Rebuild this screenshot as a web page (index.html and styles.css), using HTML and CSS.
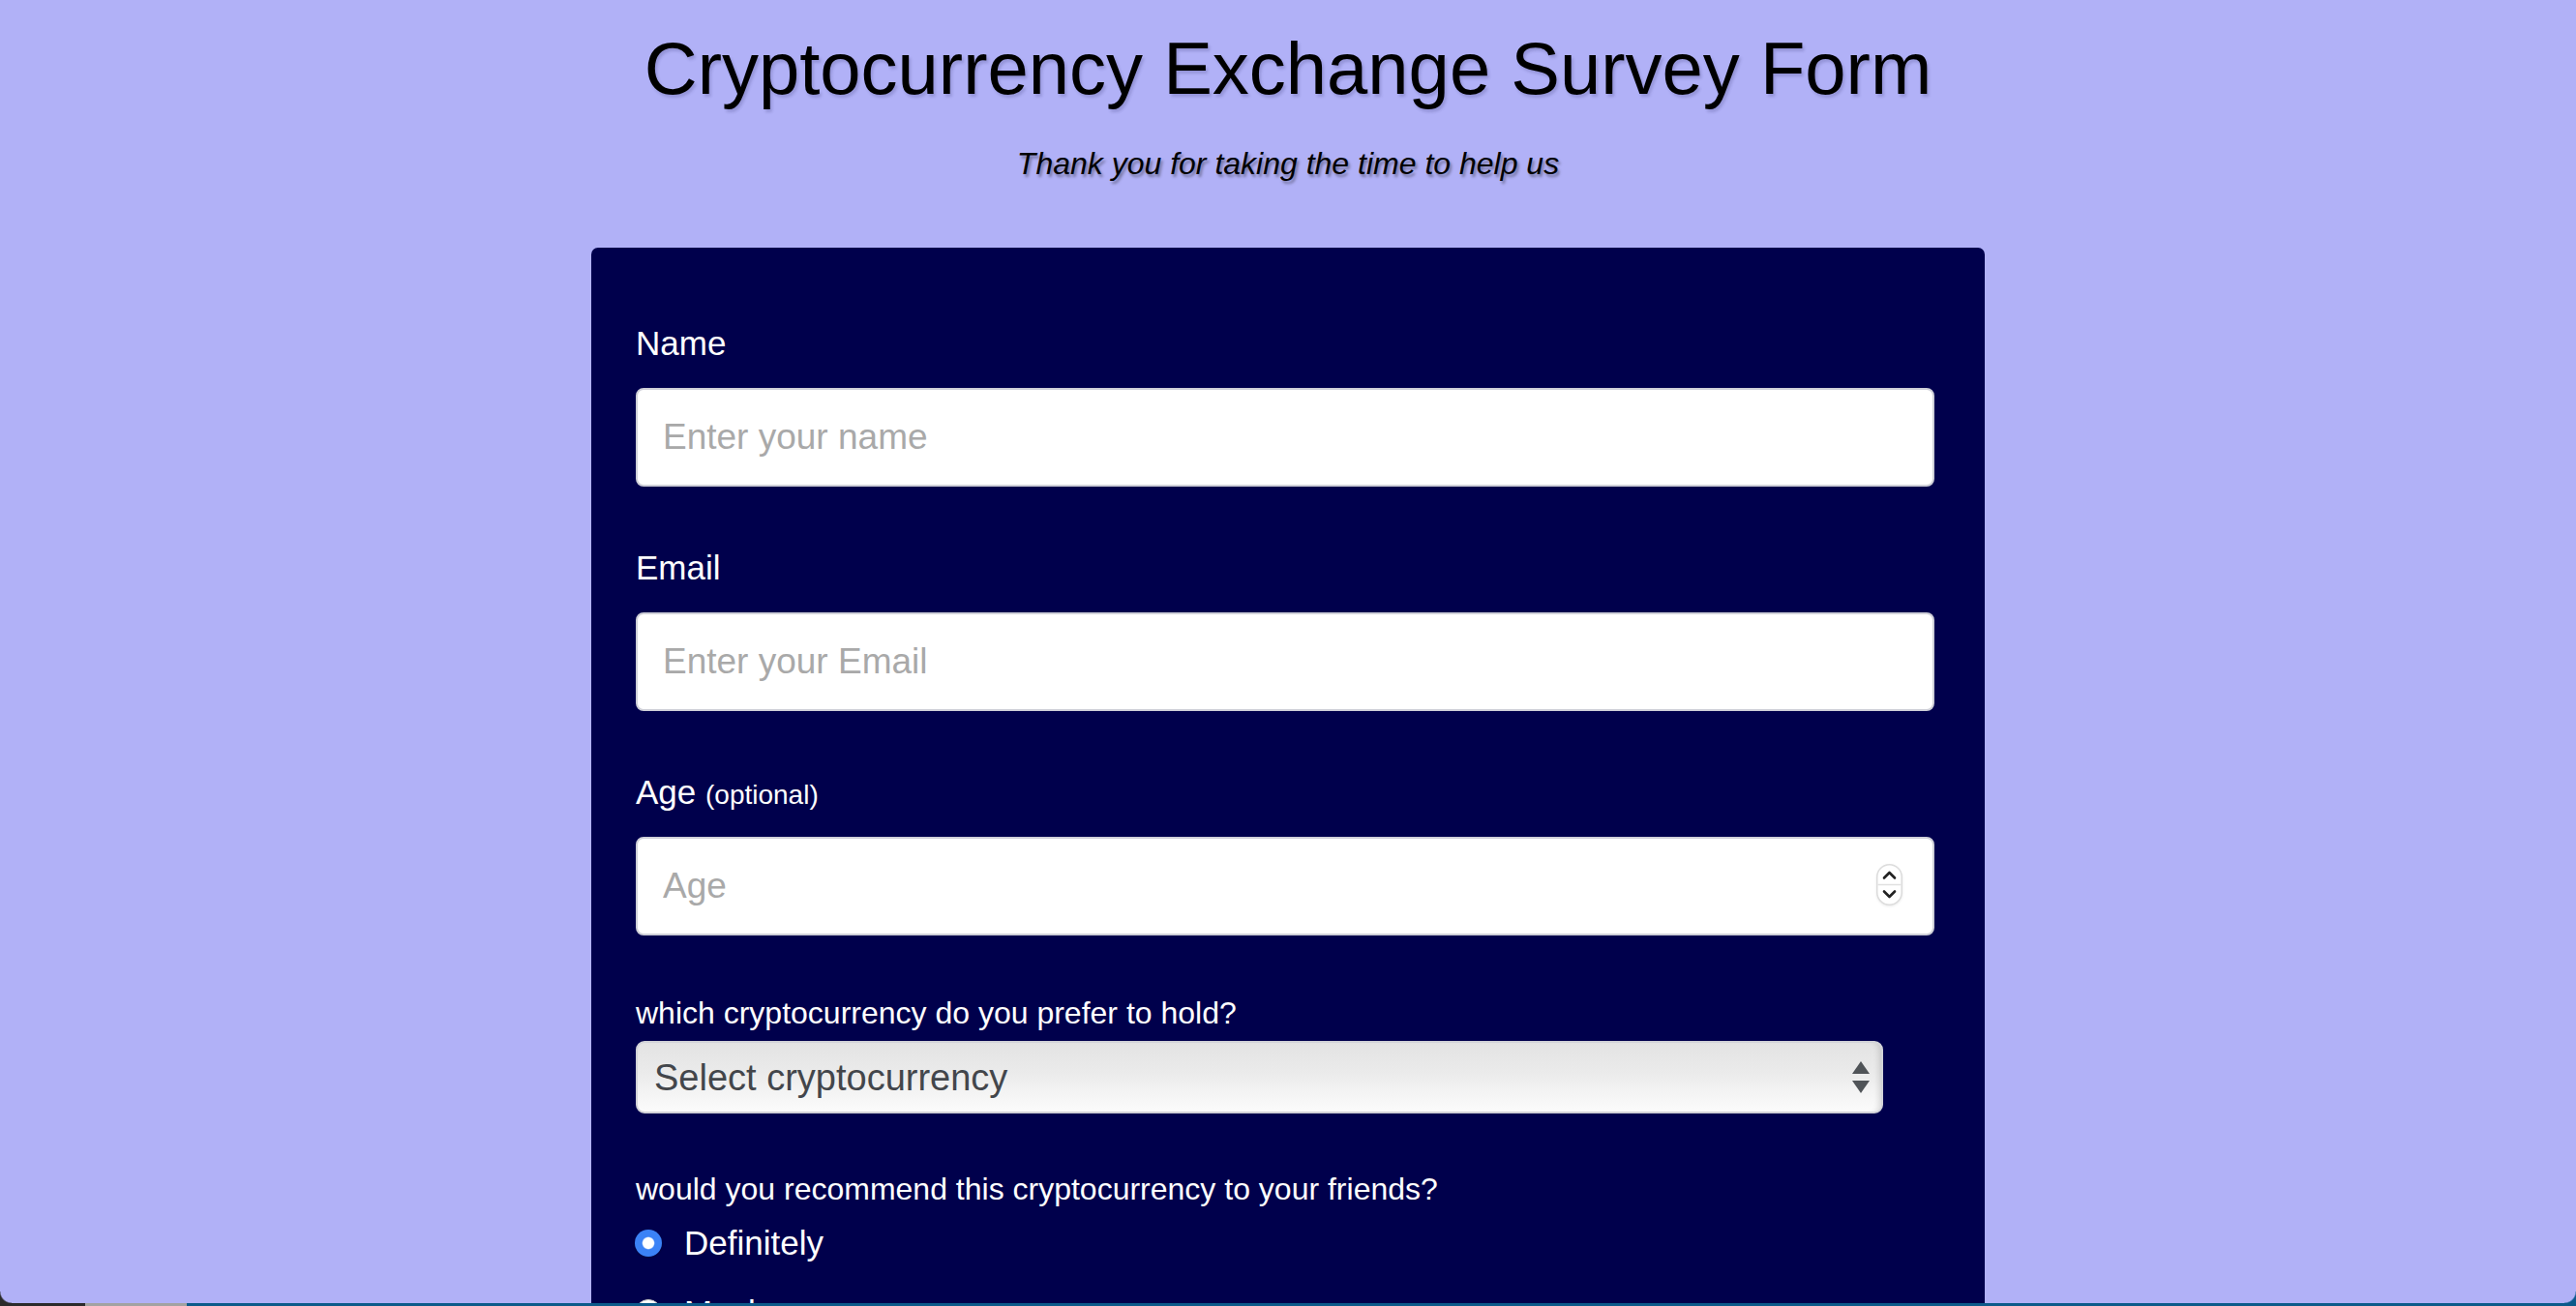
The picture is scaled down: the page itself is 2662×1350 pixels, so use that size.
FILE: index.html
```html
<!DOCTYPE html>
<html lang="en">
<head>
<meta charset="utf-8">
<title>Cryptocurrency Exchange Survey Form</title>
<link rel="stylesheet" href="styles.css">
</head>
<body>
<div class="page">
  <header class="head">
    <h1 id="title" class="title">Cryptocurrency Exchange Survey Form</h1>
    <p id="description" class="subtitle">Thank you for taking the time to help us</p>
  </header>

  <form id="survey-form" class="survey">
    <div class="field">
      <label class="label" for="name">Name</label>
      <input class="text-input" id="name" type="text" placeholder="Enter your name">
    </div>

    <div class="field">
      <label class="label" for="email">Email</label>
      <input class="text-input" id="email" type="email" placeholder="Enter your Email">
    </div>

    <div class="field field-age">
      <label class="label" for="number">Age <span class="hint">(optional)</span></label>
      <div class="num-wrap">
        <input class="text-input num-input" id="number" type="number" placeholder="Age">
        <span class="spinner">
          <svg width="27" height="43" viewBox="0 0 27 43">
            <rect x="0.75" y="0.75" width="25.5" height="41.5" rx="12.75" fill="#ffffff" stroke="#dcdcdc" stroke-width="1.5"/>
            <line x1="1.5" y1="21.5" x2="25.5" y2="21.5" stroke="#e0e0e0" stroke-width="1.5"/>
            <path d="M8 14.5 L13.5 9 L19 14.5" fill="none" stroke="#222222" stroke-width="2.6" stroke-linecap="round" stroke-linejoin="round"/>
            <path d="M8 28.5 L13.5 34 L19 28.5" fill="none" stroke="#222222" stroke-width="2.6" stroke-linecap="round" stroke-linejoin="round"/>
          </svg>
        </span>
      </div>
    </div>

    <div class="field-select">
      <label class="q-label" for="dropdown">which cryptocurrency do you prefer to hold?</label>
      <div class="select-wrap">
        <select class="select" id="dropdown">
          <option>Select cryptocurrency</option>
          <option>Bitcoin</option>
          <option>Ethereum</option>
          <option>Other</option>
        </select>
        <svg class="select-arrows" width="18" height="34" viewBox="0 0 18 34">
          <path d="M9 0 L18 13 L0 13 Z" fill="#505458"/>
          <path d="M0 20 L18 20 L9 33 Z" fill="#505458"/>
        </svg>
      </div>
    </div>

    <div class="field-radio">
      <p class="q-label">would you recommend this cryptocurrency to your friends?</p>
      <label class="radio-row"><input class="radio" type="radio" name="recommend" value="definitely" checked>Definitely</label>
      <label class="radio-row"><input class="radio" type="radio" name="recommend" value="maybe">Maybe</label>
      <label class="radio-row"><input class="radio" type="radio" name="recommend" value="not-sure">Not sure</label>
    </div>
  </form>
</div>
<div class="desk-strip"></div>
<div class="corner corner-bl"></div>
<div class="corner corner-br"></div>
</body>
</html>
```

FILE: styles.css
```css
html, body {
  height: 100%;
  overflow: hidden;
}

body {
  margin: 0;
  background: #b1b1f7;
  font-family: "Liberation Sans", Arial, Helvetica, sans-serif;
  color: #000;
}

.page {
  height: 100%;
}

.title {
  margin: 27px 0 0;
  font-size: 76px;
  line-height: 88px;
  font-weight: 400;
  text-align: center;
  text-shadow: 2px 3px 3px rgba(40, 40, 100, 0.2);
}

.subtitle {
  margin: 34px 0 0;
  font-size: 32px;
  line-height: 40px;
  font-style: italic;
  text-align: center;
  text-shadow: 2px 3px 3px rgba(0, 0, 0, 0.35);
}

.survey {
  box-sizing: border-box;
  width: 1440px;
  margin: 67px auto 0;
  padding: 79px 52px 300px 46px;
  background: #00004c;
  border-radius: 7px;
  color: #fff;
}

.field {
  margin-bottom: 64px;
}

.field-age {
  margin-bottom: 62px;
}

.label {
  display: block;
  font-size: 35px;
  line-height: 39px;
  height: 39px;
  margin-bottom: 27px;
}

.hint {
  font-size: 28px;
  line-height: 1;
}

.text-input {
  display: block;
  box-sizing: border-box;
  width: 100%;
  height: 102px;
  margin: 0;
  padding: 0 26px;
  border: 2px solid #cfd0d8;
  border-radius: 8px;
  background: #fff;
  font-family: inherit;
  font-size: 37px;
  color: #222;
  outline: none;
}

.text-input::placeholder {
  color: #a9a9a9;
}

.num-input {
  -moz-appearance: textfield;
}

.num-input::-webkit-inner-spin-button,
.num-input::-webkit-outer-spin-button {
  -webkit-appearance: none;
  margin: 0;
}

.num-wrap {
  position: relative;
}

.spinner {
  position: absolute;
  right: 33px;
  top: 28px;
  width: 27px;
  height: 43px;
  line-height: 0;
  filter: drop-shadow(0 1px 1px rgba(0, 0, 0, 0.08));
}

.q-label {
  display: block;
  margin: 0 0 10px;
  font-size: 32px;
  line-height: 37px;
}

.field-select {
  margin-bottom: 60px;
}

.select-wrap {
  position: relative;
  width: 1289px;
}

.select {
  -webkit-appearance: none;
  appearance: none;
  display: block;
  box-sizing: border-box;
  width: 1289px;
  height: 75px;
  margin: 0;
  padding: 0 60px 0 17px;
  border: 2px solid #d2d3d8;
  border-radius: 9px;
  background: linear-gradient(to bottom, #e3e3e3 0%, #ebebeb 45%, #f3f3f3 70%, #fbfbfb 100%);
  box-shadow: inset -7px 0 6px -5px rgba(0, 0, 0, 0.14);
  font-family: inherit;
  font-size: 38px;
  color: #43464b;
  outline: none;
}

.select-arrows {
  position: absolute;
  right: 14px;
  top: 21px;
  pointer-events: none;
}

.field-radio .q-label {
  margin-bottom: 15px;
}

.radio-row {
  display: flex;
  align-items: center;
  height: 44px;
  margin-bottom: 28px;
  font-size: 35px;
  line-height: 44px;
  color: #fff;
}

.radio {
  -webkit-appearance: none;
  appearance: none;
  box-sizing: border-box;
  width: 28px;
  height: 28px;
  margin: 0 23px 0 -1px;
  border-radius: 50%;
  border: 1px solid #c4c4c4;
  background: #fff;
  flex: none;
}

.radio:checked {
  border: none;
  background: radial-gradient(circle, #ffffff 0, #ffffff 5.5px, #3b82f6 6.8px);
  box-shadow: 0 1px 2px rgba(0, 0, 0, 0.25);
}

.desk-strip {
  position: fixed;
  left: 0;
  right: 0;
  bottom: 0;
  height: 3px;
  background: linear-gradient(to right, #2b2b2b 0, #2b2b2b 88px, #a2a2a2 88px, #a2a2a2 193px, #0b5a8a 193px);
}

.corner {
  position: fixed;
  bottom: 3px;
  width: 12px;
  height: 12px;
}

.corner-bl {
  left: 0;
  background: radial-gradient(circle at 100% 0, rgba(43, 43, 43, 0) 11px, #2b2b2b 12.5px);
}

.corner-br {
  right: 0;
  background: radial-gradient(circle at 0 0, rgba(11, 90, 138, 0) 11px, #0b5a8a 12.5px);
}
```
